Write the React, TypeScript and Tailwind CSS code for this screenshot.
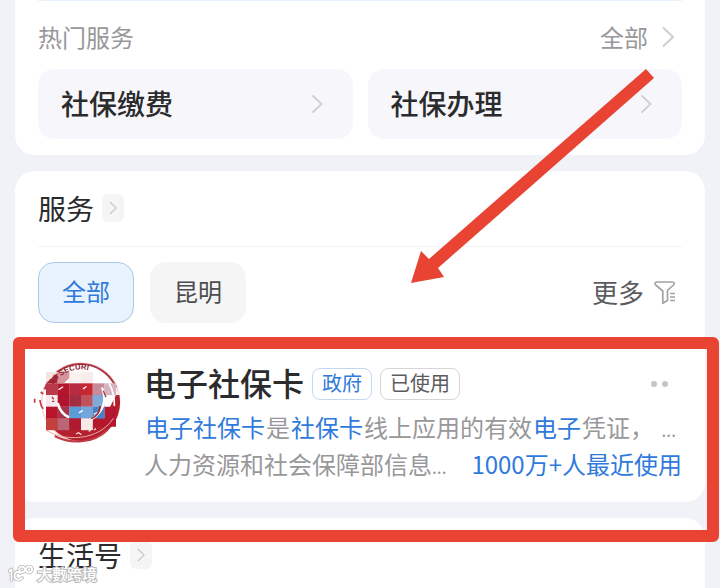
import { ReactNode } from "react";

type Tile = { x: number; y: number; fill: string };

const TILES: Tile[] = [
  { x: 78, y: 66, fill: "#f6e4e4" },
  { x: 148, y: 66, fill: "#fbf1f0" },
  { x: 183, y: 66, fill: "#f8eceb" },
  { x: 78, y: 100, fill: "#b93a48" },
  { x: 113, y: 100, fill: "#b5142b" },
  { x: 148, y: 100, fill: "#b82c42" },
  { x: 183, y: 100, fill: "#c8282f" },
  { x: 218, y: 100, fill: "#c98a99" },
  { x: 253, y: 100, fill: "#d6b3be" },
  { x: 78, y: 135, fill: "#f6e8eb" },
  { x: 113, y: 135, fill: "#b01230" },
  { x: 148, y: 135, fill: "#a52a42" },
  { x: 183, y: 135, fill: "#c0525c" },
  { x: 218, y: 135, fill: "#7fa9d6" },
  { x: 78, y: 170, fill: "#b8152d" },
  { x: 113, y: 170, fill: "#a8344c" },
  { x: 148, y: 170, fill: "#5b9bd8" },
  { x: 183, y: 170, fill: "#74a6dc" },
  { x: 218, y: 170, fill: "#4a82c4" },
  { x: 78, y: 205, fill: "#c4403f" },
  { x: 113, y: 205, fill: "#bb6676" },
  { x: 148, y: 205, fill: "#b01a31" },
  { x: 183, y: 205, fill: "#f5eae8" },
];

function Chevron({ className }: { className: string }) {
  return (
    <svg viewBox="0 0 12 22" fill="none" stroke="currentColor" strokeWidth="2" className={className} aria-hidden="true">
      <path d="M1 1.500 11 11 1 20.500" />
    </svg>
  );
}

function HotService({ label }: { label: string }) {
  return (
    <button type="button" className="flex h-[70px] flex-1 items-center justify-between rounded-2xl bg-[#f6f6fb] pl-[23px] pr-[30px]">
      <span className="pb-0.5 text-[28px] font-medium text-[#2b2b2d]">{label}</span>
      <Chevron className="h-5 w-3 text-[#cfcfd3]" />
    </button>
  );
}

function SectionTitle({ children }: { children: ReactNode }) {
  return (
    <div className="flex items-center gap-2">
      <h2 className="text-[28px] leading-10 text-[#2b2b2d]">{children}</h2>
      <button type="button" aria-label="more" className="flex h-7 w-[22px] items-center justify-center rounded-md bg-[#f5f5f6]">
        <Chevron className="h-3.5 w-2 text-[#c9c9cc]" />
      </button>
    </div>
  );
}

function Tag({ children, className }: { children: ReactNode; className: string }) {
  return <span className={`flex h-8 items-center rounded-lg border px-[9px] pb-0.5 text-xl leading-7 ${className}`}>{children}</span>;
}

function Mark({ children }: { children: ReactNode }) {
  return <span className="px-px text-[#2f7adb]">{children}</span>;
}

function Dots() {
  return <span className="font-['Noto_Sans'] text-lg">...</span>;
}

function FilterIcon() {
  return (
    <svg viewBox="0 0 22 26" fill="none" stroke="#a3a3a5" strokeWidth="1.7" strokeLinejoin="round" className="h-[26px] w-[22px]" aria-hidden="true">
      <path d="M2.500 2H18.500C20.300 2 20.800 3.800 19.500 5L13.500 10.300V20.500L8.800 23.300V11L1.700 5C.4 3.800 1 2 2.500 2Z" />
      <path d="M16 13.500h5M16 17h5M16 20.500h5" strokeWidth="1.5" />
    </svg>
  );
}

function CardLogo() {
  return (
    <svg viewBox="39 30 264 252" className="h-[84px] w-[88px]" aria-hidden="true">
      <circle cx="182" cy="156" r="117" fill="#fff" stroke="#f8dcda" strokeWidth="5" />
      <path d="M74 118A115 115 0 0 1 288 112" fill="none" stroke="#b23a45" strokeWidth="6" />
      <path d="M288 135H298A116 116 0 0 1 88 222L78 205H253Z" fill="#b5202f" />
      <path d="M253 170H288V230H218V205H253Z" fill="#b5182e" />
      <path d="M78 240C130 275 235 275 280 205" fill="none" stroke="#e9a9a9" strokeWidth="3" />
      <path d="M104 258C150 283 220 282 262 240" fill="none" stroke="#c23b46" strokeWidth="6" />
      {TILES.map(({ x, y, fill }) => (
        <rect key={`${x}-${y}`} x={x} y={y} width="35.500" height="35.500" fill={fill} />
      ))}
      <path d="M78 100 113 68V100Z" fill="#b5283a" />
      <path d="M113 66H148V84L132 100H113Z" fill="#d9939a" />
      <g fill="none" stroke="#fff" strokeLinecap="round">
        <path d="M114 162Q122 190 144 200" strokeWidth="8" />
        <path d="M247 115Q268 170 216 207" strokeWidth="7" />
        <path d="M268 102Q284 130 283 166" strokeWidth="5" />
        <path d="M117 118 128 111M190 116 198 110M178 188 187 182M223 192 233 188" strokeWidth="4" />
      </g>
      <path d="M241 168Q238 196 214 206" fill="none" stroke="#a8202f" strokeWidth="5" />
      <path d="M168 135V148M174 152V166M96 141 101 148M96 154H103M250 122 258 142" fill="none" stroke="#a03a48" strokeWidth="4" />
      <path d="M62 126 70 132M60 150Q62 170 70 176M44 146V158" fill="none" stroke="#c23b46" strokeWidth="5" />
      <path d="M168 252 176 248 184 254M206 244 212 240M222 240 228 236" fill="none" stroke="#f6dcda" strokeWidth="4" />
      <path id="logo-arc" d="M98 106A98 98 0 0 1 266 106" fill="none" />
      <text fill="#8c2434" className="font-['Liberation_Sans'] text-[23px] font-bold">
        <textPath href="#logo-arc">SS SECURI</textPath>
      </text>
    </svg>
  );
}

function Watermark() {
  return (
    <div className="absolute bottom-1 left-2 flex items-center gap-[3px]">
      <svg viewBox="0 0 26 18" className="h-[18px] w-[26px]" fill="none" strokeLinecap="round" strokeLinejoin="round" aria-hidden="true">
        <g stroke="#b9b9bb" strokeWidth="3.600">
          <path d="M1.500 6 3.500 4.500V15M12 8C9 5 6.500 8 6.500 11S10 16.500 14 13" />
          <circle cx="14" cy="4.500" r="2.800" />
          <circle cx="21" cy="4.500" r="3" />
        </g>
        <g stroke="#fff" strokeWidth="1.800">
          <path d="M1.500 6 3.500 4.500V15M12 8C9 5 6.500 8 6.500 11S10 16.500 14 13" />
          <circle cx="14" cy="4.500" r="2.800" />
          <circle cx="21" cy="4.500" r="3" />
        </g>
      </svg>
      <span className="text-[15px] leading-5 font-medium text-white [paint-order:stroke] [-webkit-text-stroke:2px_#b9b9bb]">大數跨境</span>
    </div>
  );
}

export default function App() {
  return (
    <main className="relative flex h-screen flex-col gap-4 overflow-hidden bg-[#f1f2f7] px-[15px] font-['Noto_Sans_CJK_SC',sans-serif]">
      <section className="rounded-b-[20px] bg-white px-[23px] pb-4">
        <div className="h-px rounded-b-2xl bg-[#e6f1fb]" />
        <div className="flex h-[68px] items-center justify-between pt-1 text-2xl text-[#98989a]">
          <h2>热门服务</h2>
          <a href="#all" className="flex items-center gap-3.5 pr-2">
            全部
            <Chevron className="h-[22px] w-3 text-[#cfcfd3]" />
          </a>
        </div>
        <div className="flex gap-[15px]">
          <HotService label="社保缴费" />
          <HotService label="社保办理" />
        </div>
      </section>

      <section className="rounded-[20px] bg-white px-[23px] pt-[17px] pb-5">
        <div className="border-b border-[#f3f3f4] pb-[18px]">
          <SectionTitle>服务</SectionTitle>
        </div>
        <div className="mt-[15px] flex items-center gap-4 text-2xl">
          <button type="button" className="h-[61px] w-24 rounded-2xl border border-[#a9c9e8] bg-[#e8f3fe] pb-1 text-[#2f7adb]">
            全部
          </button>
          <button type="button" className="h-[61px] w-24 rounded-2xl bg-[#f5f5f5] pb-1 text-[#4c4c4e]">
            昆明
          </button>
          <button type="button" className="ml-auto flex items-center gap-2.5 pr-1.5 text-[26px] text-[#5c5c5e]">
            更多
            <FilterIcon />
          </button>
        </div>

        <article className="relative mt-[37px] flex items-start gap-[23px]">
          <div className="-ml-[5px] shrink-0">
            <CardLogo />
          </div>
          <div className="min-w-0 flex-1 whitespace-nowrap">
            <div className="flex h-12 items-center gap-2">
              <h3 className="pb-1 text-[32px] font-medium text-[#2b2b2d]">电子社保卡</h3>
              <Tag className="border-[#c3d9f2] text-[#2f7adb]">政府</Tag>
              <Tag className="border-[#d6d6d8] text-[#5c5c5e]">已使用</Tag>
              <span className="ml-auto flex gap-[5px] pr-3.5">
                <i className="size-1.5 rounded-full bg-[#c4c4c6]" />
                <i className="size-1.5 rounded-full bg-[#c4c4c6]" />
              </span>
            </div>
            <p className="flex items-baseline justify-between pr-1.5 text-2xl leading-[37px] text-[#98989a]">
              <span>
                <Mark>电子社保卡</Mark>是<Mark>社保卡</Mark>线上应用的有效<Mark>电子</Mark>凭证，
              </span>
              <Dots />
            </p>
            <p className="flex items-baseline justify-between text-2xl leading-[37px] text-[#98989a]">
              <span>
                人力资源和社会保障部信息
                <Dots />
              </span>
              <span className="text-[#2f7adb]">1000万+人最近使用</span>
            </p>
          </div>
          <div className="pointer-events-none absolute -top-[23px] -right-[37px] bottom-[-60px] -left-[25px] rounded-md border-12 border-[#e94334]" />
        </article>
      </section>

      <section className="flex-1 rounded-t-[20px] bg-white px-[23px] pt-[17px]">
        <SectionTitle>生活号</SectionTitle>
      </section>

      <svg viewBox="0 0 243 214" className="pointer-events-none absolute top-[69px] left-[411px] h-[214px] w-[243px]" aria-hidden="true">
        <path d="M235 0 243 9 27 199 33 208 0 214 10 182 18 190Z" fill="#e94334" />
      </svg>
      <Watermark />
    </main>
  );
}
